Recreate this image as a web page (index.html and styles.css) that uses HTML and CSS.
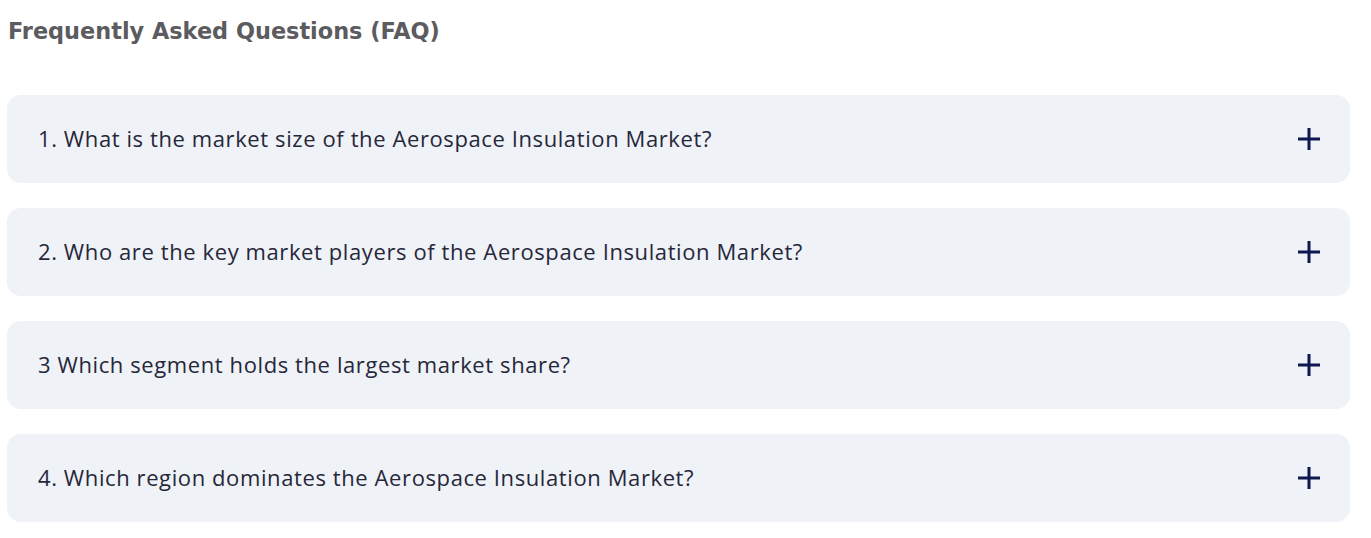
FILE: index.html
```html
<!DOCTYPE html>
<html>
<head>
<meta charset="utf-8">
<link rel="stylesheet" href="styles.css">
</head>
<body>
<section class="faq">
  <h2 class="faq-title">Frequently Asked Questions (FAQ)</h2>
  <div class="faq-list">
    <div class="faq-item">
      <span class="faq-q">1. What is the market size of the Aerospace Insulation Market?</span>
      <svg class="faq-plus" width="22" height="22" viewBox="0 0 22 22"><path d="M11 0V22M0 11H22" stroke="#0f1650" stroke-width="3" fill="none"/></svg>
    </div>
    <div class="faq-item">
      <span class="faq-q">2. Who are the key market players of the Aerospace Insulation Market?</span>
      <svg class="faq-plus" width="22" height="22" viewBox="0 0 22 22"><path d="M11 0V22M0 11H22" stroke="#0f1650" stroke-width="3" fill="none"/></svg>
    </div>
    <div class="faq-item">
      <span class="faq-q">3 Which segment holds the largest market share?</span>
      <svg class="faq-plus" width="22" height="22" viewBox="0 0 22 22"><path d="M11 0V22M0 11H22" stroke="#0f1650" stroke-width="3" fill="none"/></svg>
    </div>
    <div class="faq-item">
      <span class="faq-q">4. Which region dominates the Aerospace Insulation Market?</span>
      <svg class="faq-plus" width="22" height="22" viewBox="0 0 22 22"><path d="M11 0V22M0 11H22" stroke="#0f1650" stroke-width="3" fill="none"/></svg>
    </div>
  </div>
</section>
</body>
</html>
```

FILE: styles.css
```css
html, body {
  margin: 0;
  padding: 0;
  background: #ffffff;
}
.faq {
  padding: 0 21px 0 7px;
}
.faq-title {
  margin: 0;
  padding: 16px 0 0 1px;
  height: 95px;
  box-sizing: border-box;
  font-family: "DejaVu Sans", sans-serif;
  font-weight: 700;
  font-size: 22.4px;
  line-height: 30px;
  color: #5b5b60;
}
.faq-list {
  display: flex;
  flex-direction: column;
  gap: 25px;
}
.faq-item {
  display: flex;
  align-items: center;
  justify-content: space-between;
  height: 88px;
  padding: 0 30px 0 31px;
  background: #eff2f7;
  border-radius: 14px;
}
.faq-q {
  margin-bottom: 3px;
  font-family: "Open Sans", sans-serif;
  font-size: 22px;
  letter-spacing: 0.6px;
  color: #27273a;
}
.faq-plus {
  display: block;
  flex: none;
}
```
